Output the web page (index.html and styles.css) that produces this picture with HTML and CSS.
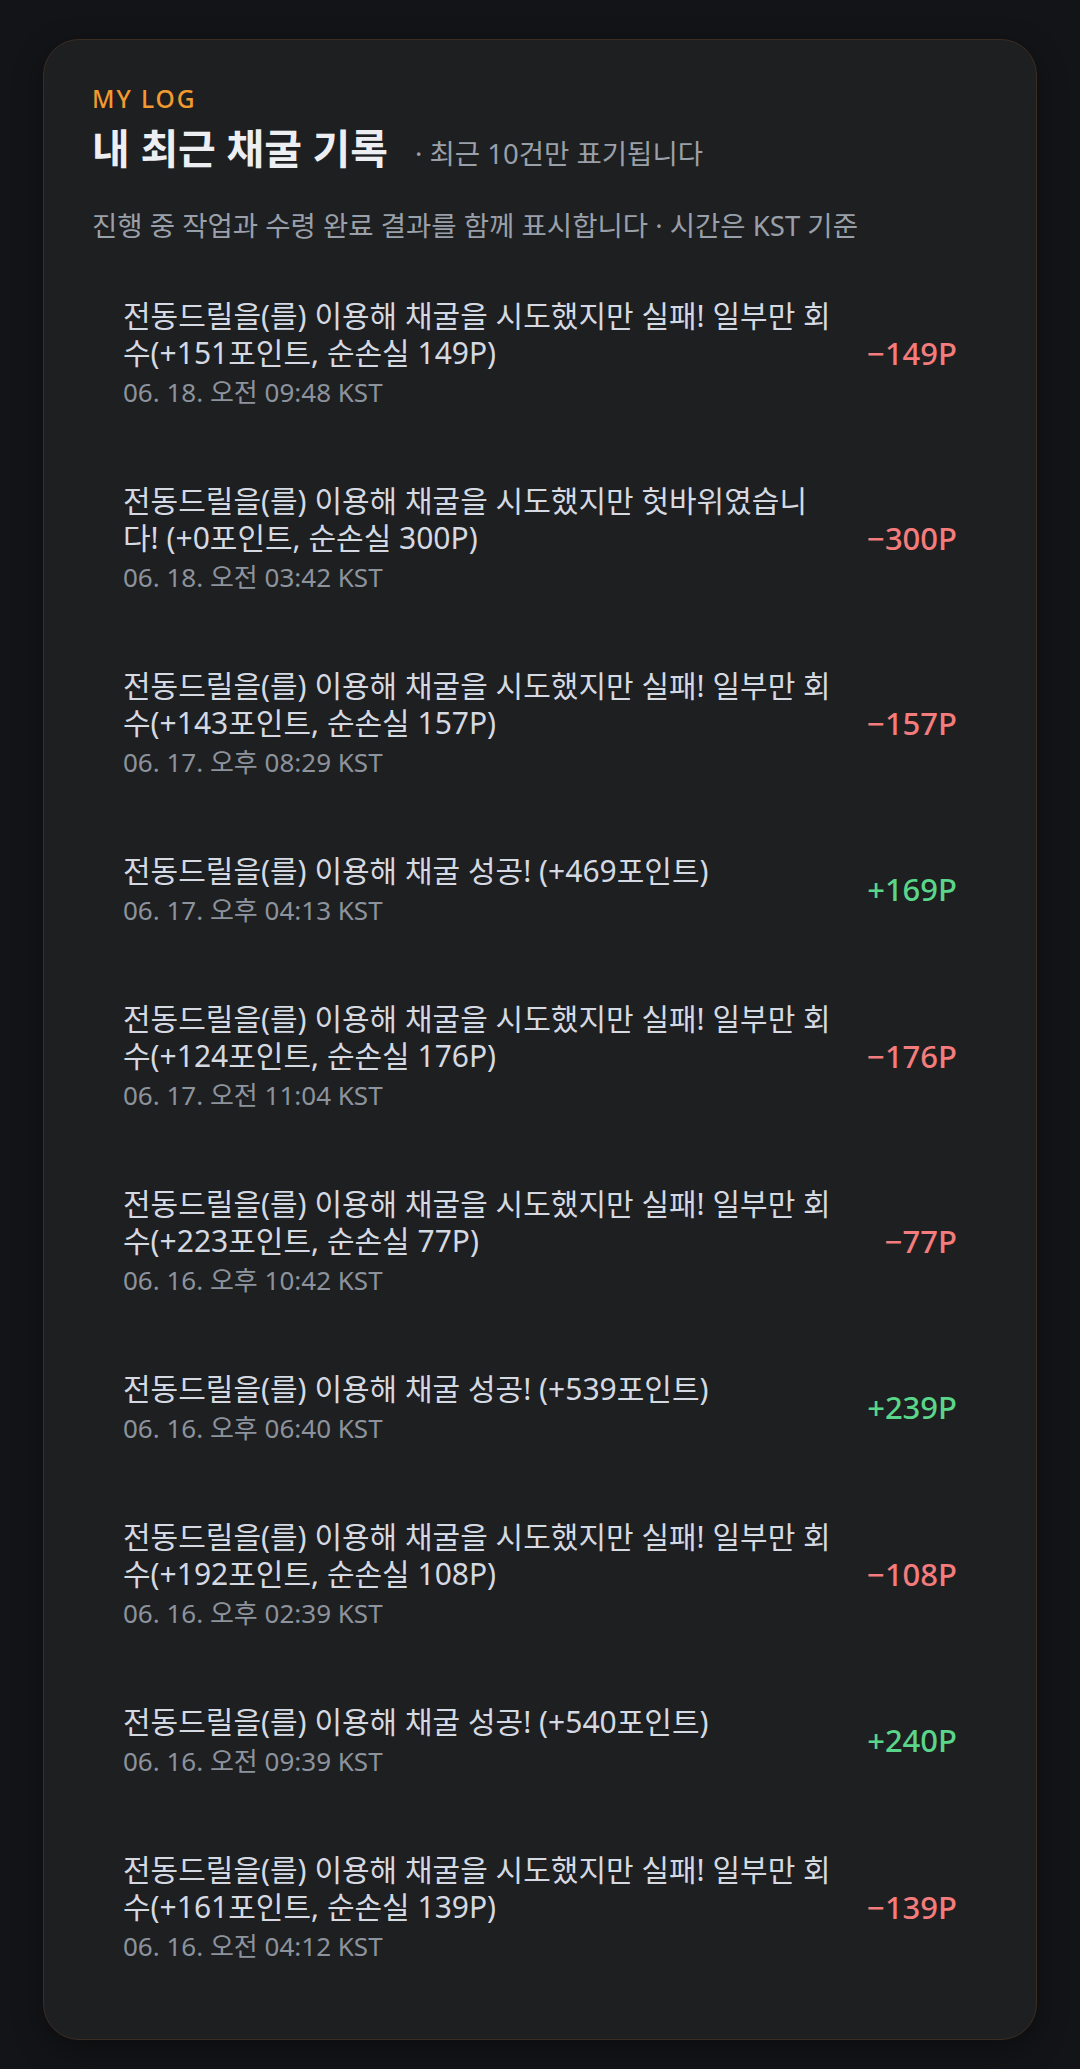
FILE: index.html
```html
<!DOCTYPE html>
<html lang="ko">
<head>
<meta charset="utf-8">
<title>MY LOG</title>
<link rel="stylesheet" href="styles.css">
</head>
<body>
<main class="page">
  <section class="card">
    <header class="card-head">
      <div class="eyebrow">MY LOG</div>
      <div class="title-row">
        <h1 class="title">내 최근 채굴 기록</h1>
        <span class="title-note">· 최근 10건만 표기됩니다</span>
      </div>
      <p class="desc">진행 중 작업과 수령 완료 결과를 함께 표시합니다 · 시간은 KST 기준</p>
    </header>
    <ul class="log-list">
      <li class="log-item">
        <div class="log-body">
          <div class="log-text">전동드릴을(를) 이용해 채굴을 시도했지만 실패! 일부만 회수(+151포인트, 순손실 149P)</div>
          <div class="log-time">06. 18. 오전 09:48 KST</div>
        </div>
        <div class="log-amount neg">−149P</div>
      </li>
      <li class="log-item">
        <div class="log-body">
          <div class="log-text">전동드릴을(를) 이용해 채굴을 시도했지만 헛바위였습니다! (+0포인트, 순손실 300P)</div>
          <div class="log-time">06. 18. 오전 03:42 KST</div>
        </div>
        <div class="log-amount neg">−300P</div>
      </li>
      <li class="log-item">
        <div class="log-body">
          <div class="log-text">전동드릴을(를) 이용해 채굴을 시도했지만 실패! 일부만 회수(+143포인트, 순손실 157P)</div>
          <div class="log-time">06. 17. 오후 08:29 KST</div>
        </div>
        <div class="log-amount neg">−157P</div>
      </li>
      <li class="log-item">
        <div class="log-body">
          <div class="log-text">전동드릴을(를) 이용해 채굴 성공! (+469포인트)</div>
          <div class="log-time">06. 17. 오후 04:13 KST</div>
        </div>
        <div class="log-amount pos">+169P</div>
      </li>
      <li class="log-item">
        <div class="log-body">
          <div class="log-text">전동드릴을(를) 이용해 채굴을 시도했지만 실패! 일부만 회수(+124포인트, 순손실 176P)</div>
          <div class="log-time">06. 17. 오전 11:04 KST</div>
        </div>
        <div class="log-amount neg">−176P</div>
      </li>
      <li class="log-item">
        <div class="log-body">
          <div class="log-text">전동드릴을(를) 이용해 채굴을 시도했지만 실패! 일부만 회수(+223포인트, 순손실 77P)</div>
          <div class="log-time">06. 16. 오후 10:42 KST</div>
        </div>
        <div class="log-amount neg">−77P</div>
      </li>
      <li class="log-item">
        <div class="log-body">
          <div class="log-text">전동드릴을(를) 이용해 채굴 성공! (+539포인트)</div>
          <div class="log-time">06. 16. 오후 06:40 KST</div>
        </div>
        <div class="log-amount pos">+239P</div>
      </li>
      <li class="log-item">
        <div class="log-body">
          <div class="log-text">전동드릴을(를) 이용해 채굴을 시도했지만 실패! 일부만 회수(+192포인트, 순손실 108P)</div>
          <div class="log-time">06. 16. 오후 02:39 KST</div>
        </div>
        <div class="log-amount neg">−108P</div>
      </li>
      <li class="log-item">
        <div class="log-body">
          <div class="log-text">전동드릴을(를) 이용해 채굴 성공! (+540포인트)</div>
          <div class="log-time">06. 16. 오전 09:39 KST</div>
        </div>
        <div class="log-amount pos">+240P</div>
      </li>
      <li class="log-item">
        <div class="log-body">
          <div class="log-text">전동드릴을(를) 이용해 채굴을 시도했지만 실패! 일부만 회수(+161포인트, 순손실 139P)</div>
          <div class="log-time">06. 16. 오전 04:12 KST</div>
        </div>
        <div class="log-amount neg">−139P</div>
      </li>
    </ul>
  </section>
</main>
</body>
</html>
```

FILE: styles.css
```css
* { box-sizing: border-box; }

html, body {
  margin: 0;
  padding: 0;
  background: #131417;
}

body {
  font-family: "Noto Sans", "Noto Sans CJK KR", sans-serif;
  color: #d5d9e1;
}

.page {
  padding: 39px 43px 32px;
}

.card {
  background: #1e1f21;
  border: 1px solid #3b2d22;
  border-radius: 36px;
  padding: 44px 48px 50px;
  box-shadow: 0 10px 30px rgba(0, 0, 0, 0.35);
}

.eyebrow {
  color: #f29a2e;
  font-size: 24.5px;
  line-height: 29px;
  letter-spacing: 0.08em;
  font-weight: 500;
}

.title-row {
  display: flex;
  align-items: baseline;
  gap: 27px;
  margin-top: 11px;
}

.title {
  margin: 0;
  font-size: 41px;
  line-height: 48px;
  font-weight: 700;
  color: #eceef2;
}

.title-note {
  font-size: 27.5px;
  color: #9aa0aa;
}

.desc {
  margin: 36px 0 0;
  font-size: 27.5px;
  line-height: 36px;
  color: #9aa0aa;
}

.log-list {
  list-style: none;
  margin: 27px 0 0;
  padding: 0;
  display: flex;
  flex-direction: column;
  gap: 21px;
}

.log-item {
  display: flex;
  align-items: center;
  gap: 12px;
  padding: 26px 31px;
}

.log-body {
  flex: 1;
  min-width: 0;
}

.log-text {
  font-size: 30px;
  line-height: 37px;
  color: #d5d9e1;
}

.log-time {
  margin-top: 4px;
  font-size: 26px;
  line-height: 34px;
  color: #8d939d;
}

.log-amount {
  flex: 0 0 108px;
  text-align: right;
  font-size: 31px;
  line-height: 37px;
  font-weight: 500;
  white-space: nowrap;
}

.neg { color: #f47c7c; }
.pos { color: #5ad58a; }
```
